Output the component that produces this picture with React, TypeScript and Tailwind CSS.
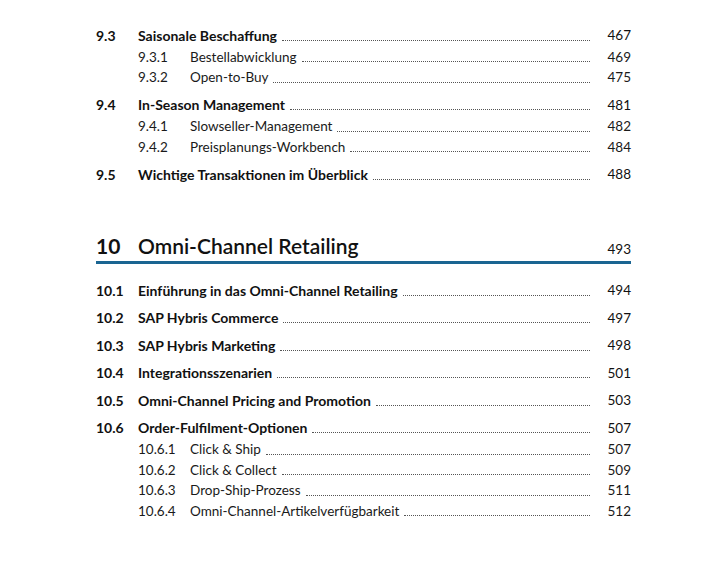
import React from "react";

type Entry = {
  num: string;
  title: string;
  page: string;
  subs?: { num: string; title: string; page: string }[];
};

const before: Entry[] = [
  {
    num: "9.3",
    title: "Saisonale Beschaffung",
    page: "467",
    subs: [
      { num: "9.3.1", title: "Bestellabwicklung", page: "469" },
      { num: "9.3.2", title: "Open-to-Buy", page: "475" },
    ],
  },
  {
    num: "9.4",
    title: "In-Season Management",
    page: "481",
    subs: [
      { num: "9.4.1", title: "Slowseller-Management", page: "482" },
      { num: "9.4.2", title: "Preisplanungs-Workbench", page: "484" },
    ],
  },
  { num: "9.5", title: "Wichtige Transaktionen im Überblick", page: "488" },
];

const chapter10: Entry[] = [
  { num: "10.1", title: "Einführung in das Omni-Channel Retailing", page: "494" },
  { num: "10.2", title: "SAP Hybris Commerce", page: "497" },
  { num: "10.3", title: "SAP Hybris Marketing", page: "498" },
  { num: "10.4", title: "Integrationsszenarien", page: "501" },
  { num: "10.5", title: "Omni-Channel Pricing and Promotion", page: "503" },
  {
    num: "10.6",
    title: "Order-Fulfilment-Optionen",
    page: "507",
    subs: [
      { num: "10.6.1", title: "Click & Ship", page: "507" },
      { num: "10.6.2", title: "Click & Collect", page: "509" },
      { num: "10.6.3", title: "Drop-Ship-Prozess", page: "511" },
      { num: "10.6.4", title: "Omni-Channel-Artikelverfügbarkeit", page: "512" },
    ],
  },
];

function Leader() {
  return <span className="ml-[5px] mb-[5px] flex-1 self-end border-b border-dotted border-[#555]" />;
}

function Section({ e }: { e: Entry }) {
  return (
    <div className="mt-[7px] first:mt-0">
      <div className="flex h-[20.5px] items-center font-bold text-[14px] text-[#111]">
        <span className="w-[42px] shrink-0">{e.num}</span>
        <span className="shrink-0">{e.title}</span>
        <Leader />
        <span className="w-[41px] shrink-0 text-right text-[13.5px] font-normal">{e.page}</span>
      </div>
      {e.subs && (
        <div className="mt-[1px] pl-[42px]">
          {e.subs.map((s) => (
            <div key={s.num} className="flex h-[20.5px] items-center text-[13.5px] text-[#1a1a1a]">
              <span className="w-[52px] shrink-0">{s.num}</span>
              <span className="shrink-0">{s.title}</span>
              <Leader />
              <span className="w-[41px] shrink-0 text-right">{s.page}</span>
            </div>
          ))}
        </div>
      )}
    </div>
  );
}

export default function App() {
  return (
    <div className="min-h-[563px] w-[722px] bg-white font-['Lato',sans-serif]">
      <div className="ml-[96px] w-[535px] pt-[25px]">
        {before.map((e) => (
          <Section key={e.num} e={e} />
        ))}

        {/* Chapter 10 heading */}
        <div className="mt-[45px] flex items-baseline border-b-[3px] border-[#1a6592]">
          <span className="w-[42px] shrink-0 text-[21px] font-bold text-[#111]">10</span>
          <span className="flex-1 text-[21px] font-semibold text-[#111]">Omni-Channel Retailing</span>
          <span className="text-[13.5px] text-[#111]">493</span>
        </div>

        <div className="pt-[16px]">
          {chapter10.map((e) => (
            <Section key={e.num} e={e} />
          ))}
        </div>
      </div>
    </div>
  );
}
